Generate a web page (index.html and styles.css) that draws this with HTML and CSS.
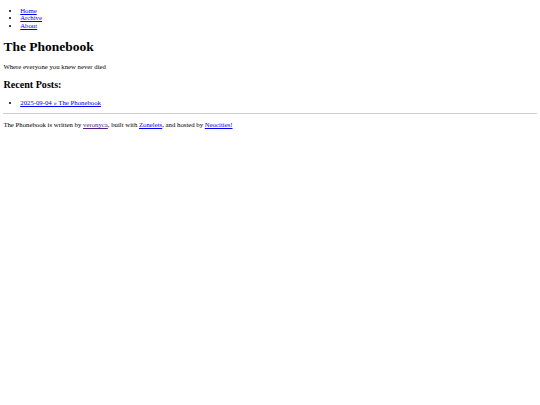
FILE: index.html
```html
<!DOCTYPE html>
<html>
<head>
<meta charset="utf-8">
<title>The Phonebook</title>
<link rel="stylesheet" href="styles.css">
</head>
<body>
<nav class="nav">
<ul class="list nav-list">
<li><a href="#">Home</a></li>
<li><a href="#">Archive</a></li>
<li><a href="#">About</a></li>
</ul>
</nav>
<h1 class="title">The Phonebook</h1>
<p class="text">Where everyone you knew never died</p>
<h2 class="subtitle">Recent Posts:</h2>
<ul class="list">
<li><a href="#">2025-09-04 » The Phonebook</a></li>
</ul>
<hr class="rule">
<footer class="footer">
<p class="text">The Phonebook is written by <a class="visited" href="#">veronyca</a>, built with <a href="#">Zonelets</a>, and hosted by <a href="#">Neocities!</a></p>
</footer>
</body>
</html>
```
FILE: styles.css
```css
html {
  background: #fff;
}
body {
  margin: 3.375px;
  font-family: "Liberation Serif", "Times New Roman", serif;
  font-size: 6.75px;
  line-height: 7.6px;
  color: #000;
}
a {
  color: #0000ee;
}
a.visited {
  color: #551a8b;
}
.list {
  margin: 6.75px 0;
  padding-left: 16.875px;
}
.nav-list {
  margin-top: 3.375px;
}
.title {
  font-size: 13.5px;
  line-height: 15.5px;
  margin: 9.05px 0;
  font-weight: bold;
}
.subtitle {
  font-size: 10.125px;
  line-height: 11.6px;
  margin: 8.4px 0;
  font-weight: bold;
}
.text {
  margin: 6.75px 0;
}
.rule {
  margin: 3.375px 0;
  border: none;
  border-top: 1px solid #cfcfcf;
  height: 0;
}
```
